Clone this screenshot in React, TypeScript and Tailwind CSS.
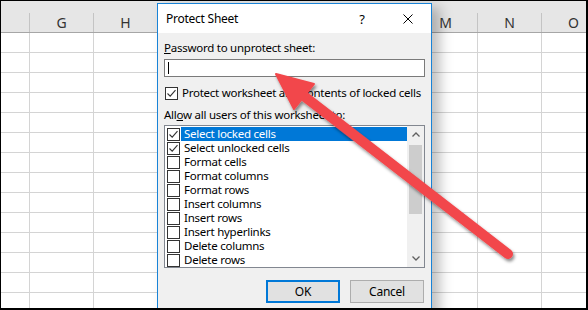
import clsx from "clsx";

// I–L sit under the dialog, so their letters are left blank
const cols = ["", "G", "H", "", "", "", "", "M", "N", "O"];

const perms = [
  { label: "Select locked cells", checked: true, selected: true },
  { label: "Select unlocked cells", checked: true },
  { label: "Format cells" },
  { label: "Format columns" },
  { label: "Format rows" },
  { label: "Insert columns" },
  { label: "Insert rows" },
  { label: "Insert hyperlinks" },
  { label: "Delete columns" },
  { label: "Delete rows" },
];

function Box({ checked }: { checked?: boolean }) {
  return (
    <span className="w-[13px] h-[13px] shrink-0 border border-[#333] bg-white flex items-center justify-center">
      {checked && (
        <svg width="11" height="11" viewBox="0 0 11 11">
          <path d="M1.5 5.5 L4.2 8.2 L9.5 2.2" fill="none" stroke="#333" strokeWidth="1.1" />
        </svg>
      )}
    </span>
  );
}

function Chevron({ up }: { up?: boolean }) {
  return (
    <svg width="8" height="5" viewBox="0 0 8 5">
      <path
        d={up ? "M0.5 4.5 L4 1 L7.5 4.5" : "M0.5 0.5 L4 4 L7.5 0.5"}
        fill="none"
        stroke="#606060"
        strokeWidth="1.3"
      />
    </svg>
  );
}

function Sheet() {
  return (
    <div>
      <div className="h-[12px] bg-[#e6e6e6]" />
      <div className="flex h-[20px] bg-[#e6e6e6] border-b border-[#a6a6a6]">
        {cols.map((c, i) => (
          <div
            key={i}
            className={clsx(
              "shrink-0 border-r border-[#c4c4c4] flex items-center justify-center text-[14px] text-[#333]",
              i === 0 ? "w-[29px]" : "w-[64px]"
            )}
          >
            {c}
          </div>
        ))}
      </div>
      {Array.from({ length: 14 }).map((_, r) => (
        <div key={r} className="flex h-[20px] border-b border-[#d4d4d4]">
          {cols.map((_, i) => (
            <div
              key={i}
              className={clsx("shrink-0 border-r border-[#d4d4d4]", i === 0 ? "w-[29px]" : "w-[64px]")}
            />
          ))}
        </div>
      ))}
    </div>
  );
}

function Dialog() {
  return (
    <div className="absolute left-[156px] top-[2px] w-[275px] h-[330px] border border-[#1883d7] bg-[#f0f0f0] shadow-[8px_4px_12px_rgba(0,0,0,0.25)] text-[11.5px] tracking-[-0.25px] leading-[14px] text-black whitespace-nowrap">
      <div className="h-[29px] bg-white flex items-center">
        <span className="pl-[8px] text-[12px]">Protect Sheet</span>
        <div className="flex-1" />
        <span className="w-[46px] text-center text-[13px]">?</span>
        <span className="w-[46px] flex items-center justify-center">
          <svg width="10" height="10" viewBox="0 0 10 10">
            <path d="M0.5 0.5 L9.5 9.5 M9.5 0.5 L0.5 9.5" stroke="#000" strokeWidth="1" />
          </svg>
        </span>
      </div>
      <div className="px-[6px] pt-[8px]">
        <div>
          <span className="underline">P</span>assword to unprotect sheet:
        </div>
        <div className="mt-[4px] h-[18px] border border-[#7a7a7a] bg-white flex items-center pl-[3px]">
          <span className="w-px h-[12px] bg-black" />
        </div>
        <div className="mt-[9px] h-[14px] flex items-center">
          <span className="ml-[1px]">
            <Box checked />
          </span>
          <span className="ml-[4px]">
            Protect worksheet and <span className="underline">c</span>ontents of locked cells
          </span>
        </div>
        <div className="mt-[8px]">
          All<span className="underline">o</span>w all users of this worksheet to:
        </div>
        <div className="mt-[3px] h-[143px] border border-[#828790] bg-white flex">
          <div className="flex-1 pt-[1px]">
            {perms.map((p) => (
              <div key={p.label} className="h-[14px] flex items-center">
                <span className="ml-[2px]">
                  <Box checked={p.checked} />
                </span>
                <span
                  className={clsx(
                    "ml-[1px] flex-1 h-[14px] pl-[3px]",
                    p.selected ? "bg-[#0078d7] text-white" : ""
                  )}
                >
                  {p.label}
                </span>
              </div>
            ))}
          </div>
          <div className="w-[17px] bg-[#f0f0f0] flex flex-col">
            <div className="h-[17px] flex items-center justify-center">
              <Chevron up />
            </div>
            <div className="mx-[2px] mt-[2px] h-[69px] bg-[#cdcdcd]" />
            <div className="flex-1" />
            <div className="h-[17px] flex items-center justify-center">
              <Chevron />
            </div>
          </div>
        </div>
        <div className="mt-[12px] flex justify-end gap-[10px] mr-[1px]">
          <button className="w-[74px] h-[23px] border-2 border-[#0078d7] bg-[#e1e1e1] text-[12px]">OK</button>
          <button className="w-[74px] h-[23px] border border-[#adadad] bg-[#e1e1e1] text-[12px]">Cancel</button>
        </div>
      </div>
    </div>
  );
}

function Arrow() {
  return (
    <svg className="absolute left-[-1px] top-[-1px]" width="588" height="310" viewBox="0 0 588 310">
      <defs>
        <filter id="sh" x="-20%" y="-20%" width="140%" height="140%">
          <feDropShadow dx="1.5" dy="2.5" stdDeviation="1.6" floodColor="#000" floodOpacity="0.45" />
        </filter>
      </defs>
      <g filter="url(#sh)">
        <line x1="508" y1="254" x2="300" y2="93" stroke="#f2474b" strokeWidth="10" strokeLinecap="round" />
        <polygon
          points="276,74 294,109 314,84"
          fill="#f2474b"
          stroke="#f2474b"
          strokeWidth="2"
          strokeLinejoin="round"
        />
      </g>
    </svg>
  );
}

export default function App() {
  return (
    <div className="relative w-[588px] h-[310px] overflow-hidden bg-white border-t border-l border-r-2 border-b-2 border-black font-['Noto_Sans',sans-serif]">
      <Sheet />
      <Dialog />
      <Arrow />
    </div>
  );
}
